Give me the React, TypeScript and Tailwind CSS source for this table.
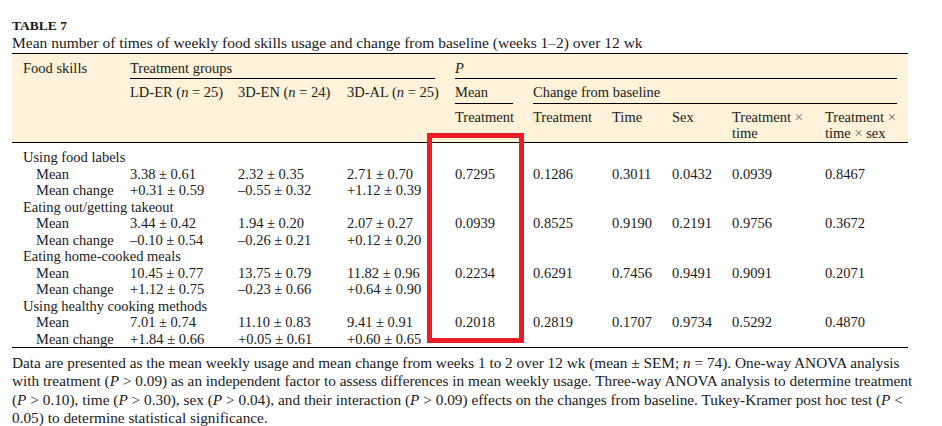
import React from "react";

const cols = "grid-cols-[118px_108px_109px_108px_78px_79px_60px_60px_93px_83px]";

type Group = {
  label: string;
  mean: [string, string, string];
  change: [string, string, string];
  p: [string, string, string, string, string, string];
};

const groups: Group[] = [
  {
    label: "Using food labels",
    mean: ["3.38 ± 0.61", "2.32 ± 0.35", "2.71 ± 0.70"],
    change: ["+0.31 ± 0.59", "–0.55 ± 0.32", "+1.12 ± 0.39"],
    p: ["0.7295", "0.1286", "0.3011", "0.0432", "0.0939", "0.8467"],
  },
  {
    label: "Eating out/getting takeout",
    mean: ["3.44 ± 0.42", "1.94 ± 0.20", "2.07 ± 0.27"],
    change: ["–0.10 ± 0.54", "–0.26 ± 0.21", "+0.12 ± 0.20"],
    p: ["0.0939", "0.8525", "0.9190", "0.2191", "0.9756", "0.3672"],
  },
  {
    label: "Eating home-cooked meals",
    mean: ["10.45 ± 0.77", "13.75 ± 0.79", "11.82 ± 0.96"],
    change: ["+1.12 ± 0.75", "–0.23 ± 0.66", "+0.64 ± 0.90"],
    p: ["0.2234", "0.6291", "0.7456", "0.9491", "0.9091", "0.2071"],
  },
  {
    label: "Using healthy cooking methods",
    mean: ["7.01 ± 0.74", "11.10 ± 0.83", "9.41 ± 0.91"],
    change: ["+1.84 ± 0.66", "+0.05 ± 0.61", "+0.60 ± 0.65"],
    p: ["0.2018", "0.2819", "0.1707", "0.9734", "0.5292", "0.4870"],
  },
];

export default function App() {
  return (
    <div className="relative w-[942px] h-[426px] bg-white text-[#1a1a1a] font-['Liberation_Serif',serif] overflow-hidden">
      <div className="pl-3 pt-[17px] mb-[1px]">
        <div className="font-bold text-[13.5px] leading-[17px]">TABLE 7</div>
        <div className="text-[15.5px] leading-[18px] whitespace-nowrap">
          Mean number of times of weekly food skills usage and change from baseline (weeks 1–2) over 12 wk
        </div>
      </div>

      <div className="ml-3 w-[896px] border-t border-b border-black bg-[#fef3d9] text-[14.5px]">
        <div className={`grid ${cols} pt-[6px] pb-[1px]`}>
          <div className="row-span-3 pl-[11px] leading-[16px]">Food skills</div>
          <div className="col-span-3 pr-[20px]">
            <div className="leading-[16px] pb-[2px] border-b border-black">Treatment groups</div>
          </div>
          <div className="col-span-6 pr-[11px]">
            <div className="leading-[16px] pb-[2px] border-b border-black italic">P</div>
          </div>

          <div className="pt-[5px] leading-[16px] whitespace-nowrap">
            LD-ER (<span className="italic">n</span> = 25)
          </div>
          <div className="pt-[5px] leading-[16px] whitespace-nowrap">
            3D-EN (<span className="italic">n</span> = 24)
          </div>
          <div className="pt-[5px] leading-[16px] whitespace-nowrap">
            3D-AL (<span className="italic">n</span> = 25)
          </div>
          <div className="pr-[20px] pt-[5px]">
            <div className="leading-[16px] pb-[3px] border-b border-black">Mean</div>
          </div>
          <div className="col-span-5 pr-[11px] pt-[5px]">
            <div className="leading-[16px] pb-[3px] border-b border-black">Change from baseline</div>
          </div>

          <div className="col-span-3"></div>
          <div className="pt-[5px] leading-[16px]">Treatment</div>
          <div className="pt-[5px] leading-[16px]">Treatment</div>
          <div className="pt-[5px] leading-[16px]">Time</div>
          <div className="pt-[5px] leading-[16px]">Sex</div>
          <div className="pt-[5px] leading-[16px] whitespace-nowrap">
            Treatment <span className="text-[#666]">×</span>
            <br />
            time
          </div>
          <div className="pt-[5px] leading-[16px] whitespace-nowrap">
            Treatment <span className="text-[#666]">×</span>
            <br />
            time <span className="text-[#666]">×</span> sex
          </div>
        </div>
      </div>

      <div className="ml-3 w-[896px] border-b border-black text-[14.5px]">
        <div className={`grid ${cols} pt-[6px] pb-0 leading-[16.5px]`}>
          {groups.map((g) => (
            <React.Fragment key={g.label}>
              <div className="col-span-10 pl-[11px] whitespace-nowrap">{g.label}</div>
              <div className="pl-[24px] whitespace-nowrap">Mean</div>
              {g.mean.map((v, i) => (
                <div key={"m" + i} className="whitespace-nowrap">{v}</div>
              ))}
              {g.p.map((v, i) => (
                <div key={"p" + i} className="whitespace-nowrap">{v}</div>
              ))}
              <div className="pl-[24px] whitespace-nowrap">Mean change</div>
              {g.change.map((v, i) => (
                <div key={"c" + i} className="whitespace-nowrap">{v}</div>
              ))}
              <div className="col-span-6"></div>
            </React.Fragment>
          ))}
        </div>
      </div>

      <div className="pl-3 pt-[6px] text-[15.3px] leading-[18.3px] whitespace-nowrap">
        Data are presented as the mean weekly usage and mean change from weeks 1 to 2 over 12 wk (mean ± SEM;{" "}
        <span className="italic">n</span> = 74). One-way ANOVA analysis
        <br />
        with treatment (<span className="italic">P</span> &gt; 0.09) as an independent factor to assess differences in
        mean weekly usage. Three-way ANOVA analysis to determine treatment
        <br />(<span className="italic">P</span> &gt; 0.10), time (<span className="italic">P</span> &gt; 0.30), sex (
        <span className="italic">P</span> &gt; 0.04), and their interaction (<span className="italic">P</span> &gt;
        0.09) effects on the changes from baseline. Tukey-Kramer post hoc test (<span className="italic">P</span> &lt;
        <br />
        0.05) to determine statistical significance.
      </div>

      <div className="absolute left-[427px] top-[133px] w-[97px] h-[210px] border-[5px] border-[#ed1c24]"></div>
    </div>
  );
}
